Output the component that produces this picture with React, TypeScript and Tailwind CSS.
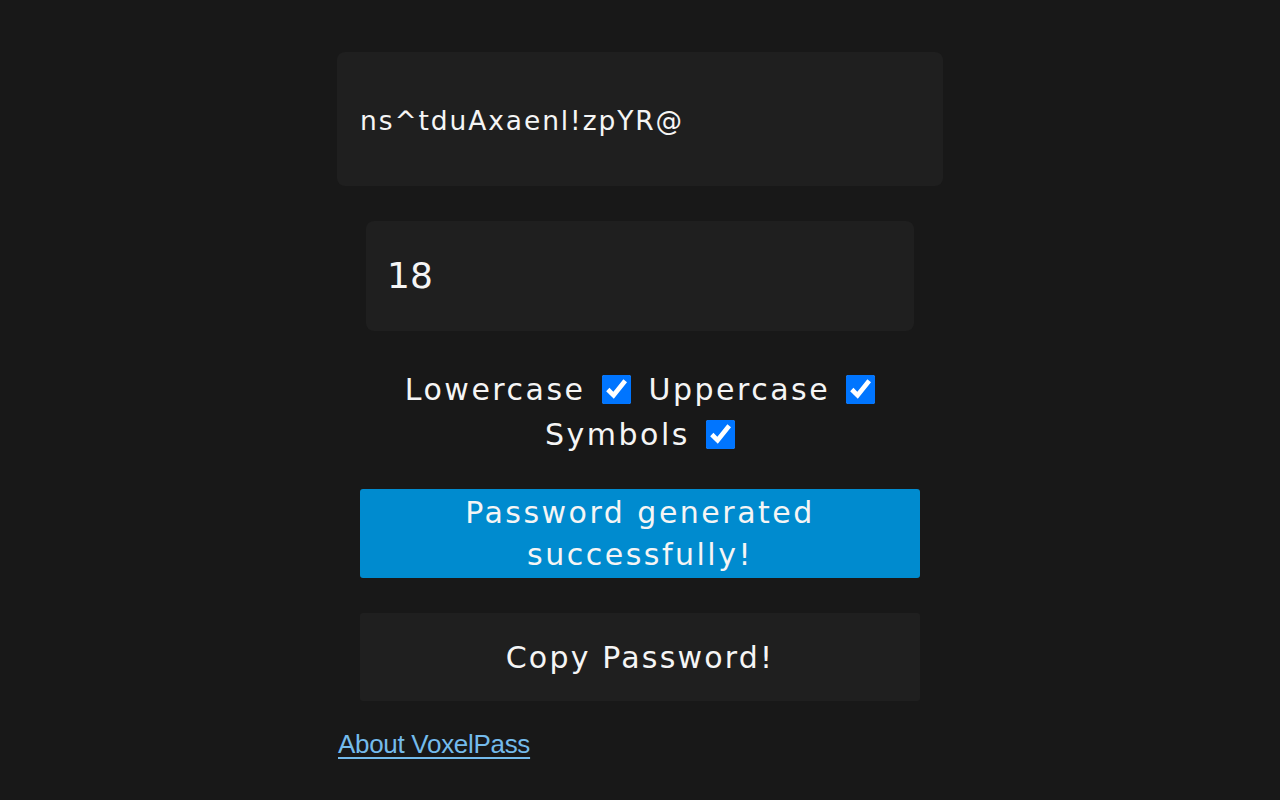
import { useState } from "react";

const font = { fontFamily: '"DejaVu Sans", "Noto Sans", sans-serif' };

function Option({ label, checked, onChange }: { label: string; checked: boolean; onChange: () => void }) {
  return (
    <label className="inline-flex items-center gap-[16px] mx-[9px]">
      <span>{label}</span>
      <input
        type="checkbox"
        checked={checked}
        onChange={onChange}
        className="w-[29px] h-[29px] accent-[#0075ff] m-0"
      />
    </label>
  );
}

export default function App() {
  const [opts, setOpts] = useState({ lower: true, upper: true, symbols: true });
  const toggle = (k: keyof typeof opts) => setOpts({ ...opts, [k]: !opts[k] });

  return (
    <div className="min-h-screen bg-[#181818] text-[#f5f5f5]" style={font}>
      <div className="w-[606px] mx-auto pt-[52px] flex flex-col items-center">
        {/* Generated password */}
        <div className="w-full h-[134px] bg-[#1f1f1f] rounded-lg px-[23px] pt-[3px] flex items-center text-[26.5px] tracking-[1.9px]">
          ns^tduAxaenl!zpYR@
        </div>

        {/* Length */}
        <div className="mt-[35px] w-[548px] h-[110px] bg-[#1f1f1f] rounded-lg px-[21px] flex items-center text-[36px]">
          18
        </div>

        {/* Character options */}
        <div className="mt-[36px] w-[540px] text-center text-[30px] tracking-[2.5px] leading-[45px]">
          <Option label="Lowercase" checked={opts.lower} onChange={() => toggle("lower")} />
          <Option label="Uppercase" checked={opts.upper} onChange={() => toggle("upper")} />
          <Option label="Symbols" checked={opts.symbols} onChange={() => toggle("symbols")} />
        </div>

        {/* Status */}
        <div className="mt-[32px] w-[560px] h-[89px] bg-[#008bcf] rounded-[3px] flex items-center justify-center text-center text-[30px] tracking-[2.5px] leading-[42px] px-[60px]">
          Password generated successfully!
        </div>

        {/* Copy */}
        <button className="mt-[35px] w-[560px] h-[88px] bg-[#1f1f1f] rounded-[3px] text-[30px] tracking-[2.2px] text-[#f5f5f5]">
          Copy Password!
        </button>

        <a
          href="#"
          className="self-start mt-[24px] ml-[1px] text-[26px] tracking-[-0.3px] text-[#74bbec] underline underline-offset-[4px]"
          style={{ fontFamily: '"Liberation Sans", sans-serif' }}
        >
          About VoxelPass
        </a>
      </div>
    </div>
  );
}
